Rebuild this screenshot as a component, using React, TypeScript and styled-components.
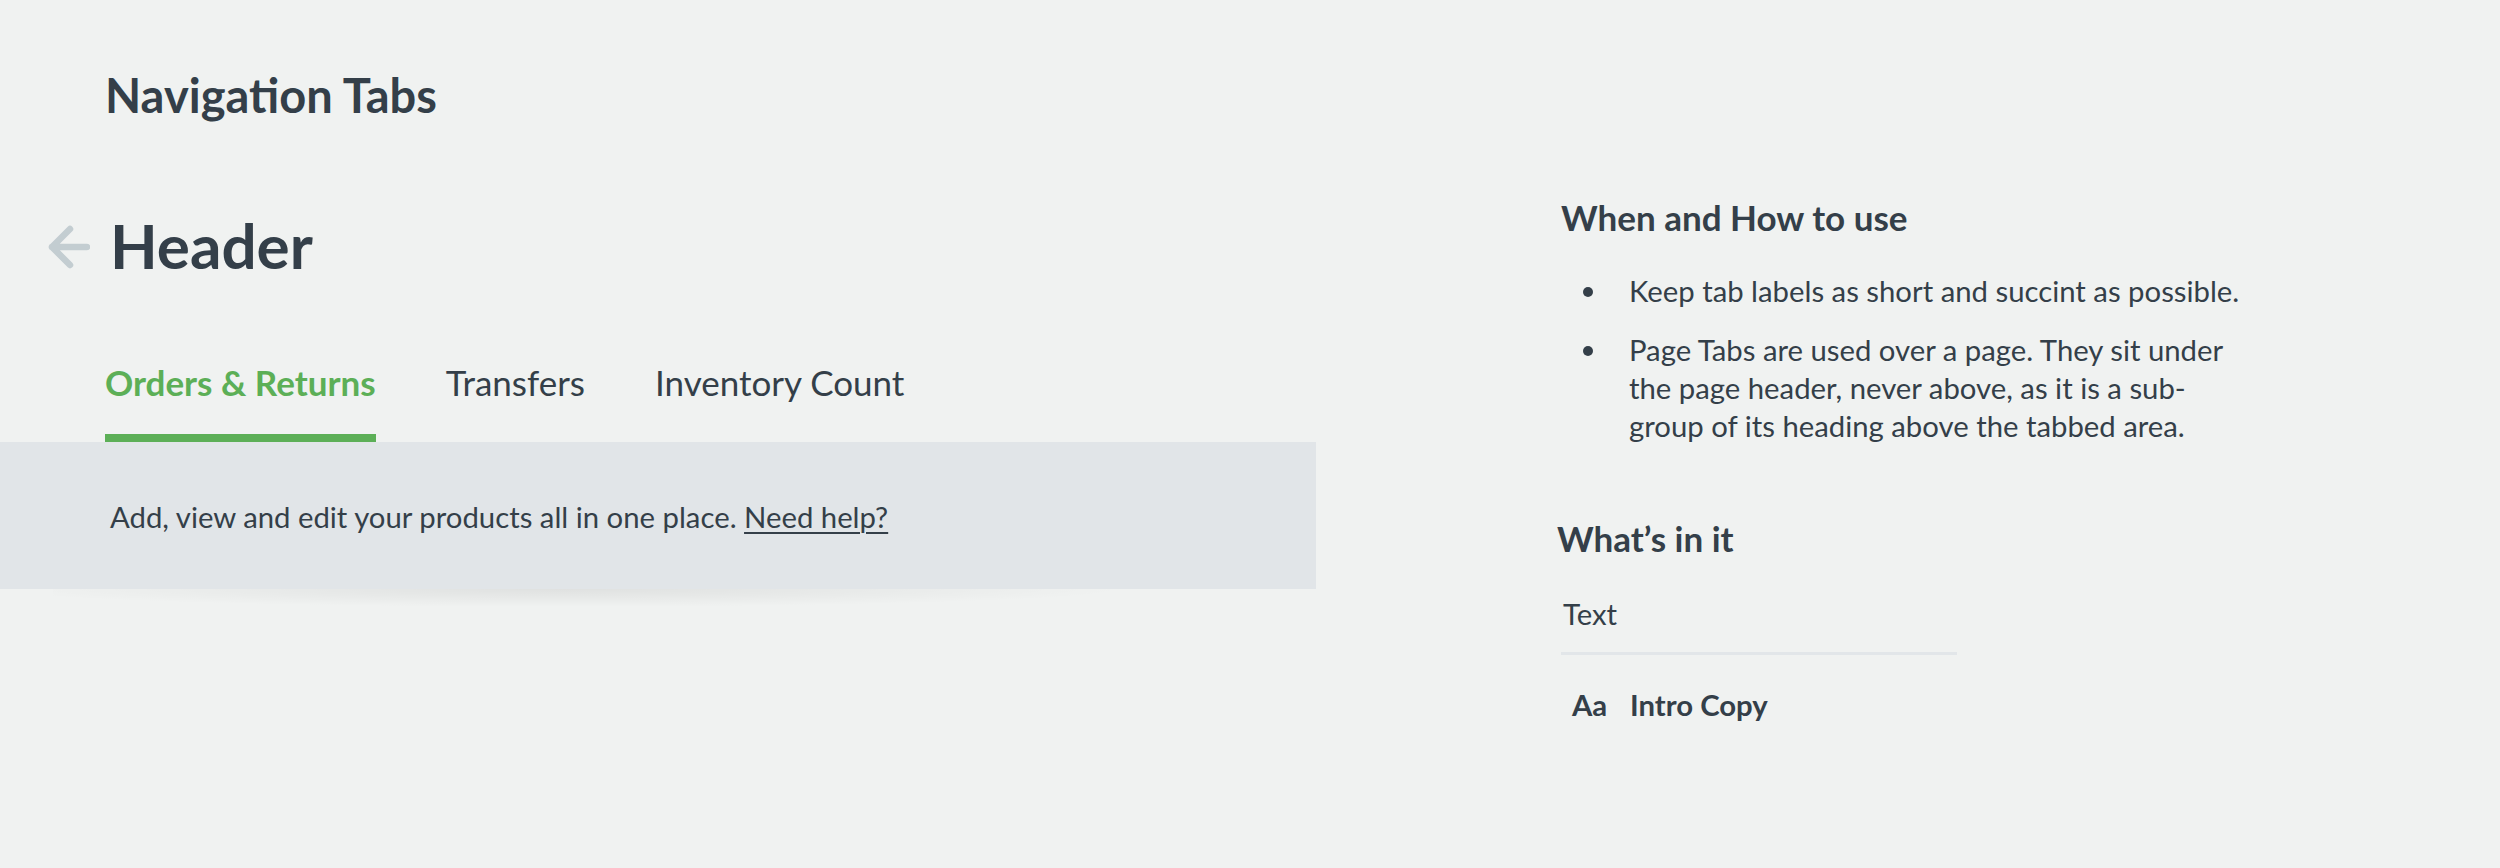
import React from "react";
import styled, { createGlobalStyle } from "styled-components";

const GlobalStyle = createGlobalStyle`
  html, body {
    margin: 0;
    padding: 0;
    background: #f0f2f1;
  }
  body {
    font-family: Lato, "Open Sans", "Liberation Sans", sans-serif;
    color: #343f49;
  }
  * { box-sizing: border-box; }
`;

const Page = styled.div`
  display: flex;
  align-items: flex-start;
  min-height: 868px;
  background: #f0f2f1;
`;

const LeftColumn = styled.section`
  width: 1316px;
  flex: none;
  padding-top: 67px;
`;

const RightColumn = styled.aside`
  flex: 1;
  padding-top: 196px;
  padding-left: 245px;
`;

const PageTitle = styled.h1`
  margin: 0 0 85px;
  padding-left: 105px;
  font-size: 47px;
  line-height: 1.2;
  font-weight: 700;
  color: #343f49;
`;

const HeaderRow = styled.div`
  display: flex;
  align-items: center;
  gap: 20px;
  padding-left: 46px;
`;

const BackButton = styled.button`
  display: flex;
  align-items: center;
  justify-content: center;
  width: 44px;
  height: 44px;
  margin-top: 2px;
  padding: 0;
  border: 0;
  background: transparent;
  cursor: pointer;
`;

const HeaderTitle = styled.h2`
  margin: 0;
  font-size: 62px;
  line-height: 1.2;
  font-weight: 700;
  color: #343f49;
`;

const TabList = styled.nav`
  display: flex;
  gap: 70px;
  margin-top: 78px;
  padding-left: 105px;
`;

const Tab = styled.a<{ $active?: boolean }>`
  display: block;
  padding-bottom: 31.5px;
  border-bottom: 8px solid ${(p) => (p.$active ? "#5caf57" : "transparent")};
  font-size: 35px;
  line-height: 1.2;
  font-weight: ${(p) => (p.$active ? 700 : 400)};
  color: ${(p) => (p.$active ? "#5caf57" : "#343f49")};
  text-decoration: none;
  cursor: pointer;
`;

const Panel = styled.div`
  position: relative;
  padding: 57px 0 55px 110px;
  background: #e1e5e8;
  font-size: 29.3px;
  line-height: 1.2;
  color: #343f49;

  &::after {
    content: "";
    position: absolute;
    left: 4%;
    top: 100%;
    width: 86%;
    height: 18px;
    background: radial-gradient(ellipse 50% 100% at 45% 0%, rgba(0, 0, 0, 0.07), rgba(0, 0, 0, 0) 100%);
    pointer-events: none;
  }
`;

const HelpLink = styled.a`
  color: #343f49;
  text-decoration: underline;
  text-underline-offset: 4px;
  text-decoration-thickness: 2px;
  cursor: pointer;
`;

const SectionTitle = styled.h3<{ $shift?: number }>`
  margin: 0;
  margin-left: ${(p) => p.$shift ?? 0}px;
  font-size: 35px;
  line-height: 1.2;
  font-weight: 700;
  color: #343f49;
`;

const BulletList = styled.ul`
  list-style: none;
  margin: 34px 0 72px;
  padding: 0 0 0 22px;
  width: 690px;
  font-size: 29.3px;
  line-height: 38px;
  color: #343f49;
`;

const BulletItem = styled.li`
  display: grid;
  grid-template-columns: 46px 622px;

  &::before {
    content: "";
    width: 10px;
    height: 10px;
    margin-top: 15px;
    border-radius: 50%;
    background: #343f49;
  }

  & + & {
    margin-top: 21px;
  }
`;

const ItemGroup = styled.div`
  width: 396px;
  margin-top: 37px;
`;

const GroupLabel = styled.div`
  padding-left: 2px;
  padding-bottom: 21px;
  border-bottom: 3px solid #e2e6e9;
  font-size: 29.3px;
  line-height: 1.2;
  color: #343f49;
`;

const ItemRow = styled.div`
  display: grid;
  grid-template-columns: 69px 1fr;
  align-items: baseline;
  margin-top: 32px;
  font-size: 29.3px;
  line-height: 1.2;
  font-weight: 700;
  color: #343f49;
`;

const ItemGlyph = styled.span`
  padding-left: 11px;
`;

const BackArrow = () => (
  <svg width="44" height="44" viewBox="0 0 44 44" fill="none">
    <path
      d="M41 22H6M24 4L6 22L24 40"
      stroke="#c3cdd1"
      strokeWidth="6.5"
      strokeLinecap="round"
      strokeLinejoin="round"
    />
  </svg>
);

export default function App() {
  const tabs = ["Orders & Returns", "Transfers", "Inventory Count"];
  return (
    <>
      <GlobalStyle />
      <Page>
        <LeftColumn>
          <PageTitle>Navigation Tabs</PageTitle>
          <HeaderRow>
            <BackButton aria-label="Back">
              <BackArrow />
            </BackButton>
            <HeaderTitle>Header</HeaderTitle>
          </HeaderRow>
          <TabList>
            {tabs.map((t, i) => (
              <Tab key={t} $active={i === 0}>
                {t}
              </Tab>
            ))}
          </TabList>
          <Panel>
            Add, view and edit your products all in one place. <HelpLink>Need help?</HelpLink>
          </Panel>
        </LeftColumn>
        <RightColumn>
          <SectionTitle>When and How to use</SectionTitle>
          <BulletList>
            <BulletItem>
              <span>Keep tab labels as short and succint as possible.</span>
            </BulletItem>
            <BulletItem>
              <span>
                Page Tabs are used over a page. They sit under the page header, never above, as it is
                a sub-group of its heading above the tabbed area.
              </span>
            </BulletItem>
          </BulletList>
          <SectionTitle $shift={-4}>What’s in it</SectionTitle>
          <ItemGroup>
            <GroupLabel>Text</GroupLabel>
            <ItemRow>
              <ItemGlyph>Aa</ItemGlyph>
              <span>Intro Copy</span>
            </ItemRow>
          </ItemGroup>
        </RightColumn>
      </Page>
    </>
  );
}
